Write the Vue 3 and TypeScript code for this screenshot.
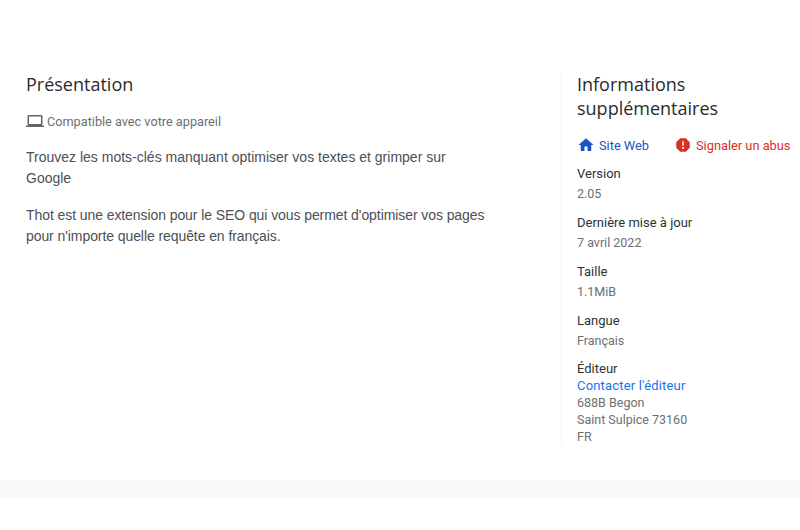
<script setup lang="ts">
interface Info { label: string; value: string }
const infos: Info[] = [
  { label: 'Version', value: '2.05' },
  { label: 'Dernière mise à jour', value: '7 avril 2022' },
  { label: 'Taille', value: '1.1MiB' },
  { label: 'Langue', value: 'Français' },
]
const address: string[] = ['688B Begon', 'Saint Sulpice 73160', 'FR']
</script>

<template>
  <div class="page">
    <div class="columns">
      <main class="overview">
        <h2 class="title">Présentation</h2>
        <div class="compat">
          <svg class="laptop" width="18" height="18" viewBox="0 0 24 24" fill="#5f6368">
            <path d="M20 18c1.1 0 2-.9 2-2V6c0-1.1-.9-2-2-2H4c-1.1 0-2 .9-2 2v10c0 1.100.9 2 2 2H0v2h24v-2h-4zM4 6h16v10H4V6z" />
          </svg>
          <span>Compatible avec votre appareil</span>
        </div>
        <p class="para">Trouvez les mots-clés manquant optimiser vos textes et grimper sur Google</p>
        <p class="para tight">Thot est une extension pour le SEO qui vous permet d'optimiser vos pages pour n'importe quelle requête en français.</p>
      </main>
      <aside class="side">
        <h2 class="title side-title">Informations supplémentaires</h2>
        <div class="links">
          <a class="link blue">
            <svg width="18" height="18" viewBox="0 0 24 24" fill="#1a56c4"><path d="M10 20v-6h4v6h5v-8h3L12 3 2 12h3v8z" /></svg>
            <span>Site Web</span>
          </a>
          <a class="link red">
            <svg width="18" height="18" viewBox="0 0 24 24" fill="#d93025"><path d="M15.73 3H8.27L3 8.27v7.46L8.27 21h7.46L21 15.730V8.270L15.730 3zM12 17.300c-.72 0-1.300-.58-1.300-1.300s.58-1.300 1.300-1.300 1.300.58 1.300 1.300-.58 1.300-1.300 1.300zm1-4.300h-2V7h2v6z" /></svg>
            <span>Signaler un abus</span>
          </a>
        </div>
        <div v-for="i in infos" :key="i.label" class="info">
          <div class="label">{{ i.label }}</div>
          <div class="value">{{ i.value }}</div>
        </div>
        <div class="publisher">
          <div class="label pub-label">Éditeur</div>
          <div class="contact">Contacter l'éditeur</div>
          <div v-for="line in address" :key="line" class="addr">{{ line }}</div>
        </div>
      </aside>
    </div>
    <div class="band"></div>
  </div>
</template>

<style>
html, body { margin: 0; background: #fff; }
</style>

<style scoped>
.page {
  width: 800px;
  height: 530px;
  overflow: hidden;
  background: #fff;
  box-sizing: border-box;
  padding-top: 72px;
  font-family: Roboto, "Liberation Sans", sans-serif;
}
.columns { display: flex; height: 374px; }
.overview { width: 561px; padding-left: 26px; box-sizing: border-box; flex: none; }
.title {
  margin: 0;
  font-family: "Open Sans", Roboto, sans-serif;
  font-weight: 400;
  font-size: 18px;
  line-height: 24px;
  color: #2a2b2e;
}
.compat {
  display: flex;
  align-items: center;
  gap: 3px;
  margin-top: 15px;
  height: 20px;
  font-size: 12.700px;
  color: #6b6f73;
}
.para {
  margin: 0;
  width: 465px;
  font-family: "Liberation Sans", Arial, sans-serif;
  font-size: 14px;
  line-height: 21px;
  color: #4d5054;
}
.tight { letter-spacing: -0.08px; }
.compat + .para { margin-top: 16px; }
.para + .para { margin-top: 16px; }
.side {
  border-left: 1px solid #f1f3f4;
  padding-left: 15px;
  flex: 1;
  min-width: 0;
}
.side-title { width: 200px; }
.links { display: flex; gap: 25px; margin-top: 15px; height: 20px; align-items: center; }
.link {
  display: flex;
  align-items: center;
  gap: 4px;
  font-size: 12.800px;
  white-space: nowrap;
}
.link svg { flex: none; }
.blue { color: #1a56c4; }
.red { color: #d93025; }
.info { margin-bottom: 10px; }
.links + .info { margin-top: 9px; }
.label {
  font-size: 13px;
  line-height: 20px;
  font-weight: 400;
  color: #303134;
}
.pub-label { line-height: 17px; }
.value, .addr {
  font-size: 12.500px;
  line-height: 19px;
  color: #6b6f73;
}
.contact { font-size: 13px; line-height: 17px; color: #1a73e8; letter-spacing: 0.18px; }
.addr { line-height: 17px; }
.band { height: 18px; margin-top: 34px; background: #fafafa; }
</style>
